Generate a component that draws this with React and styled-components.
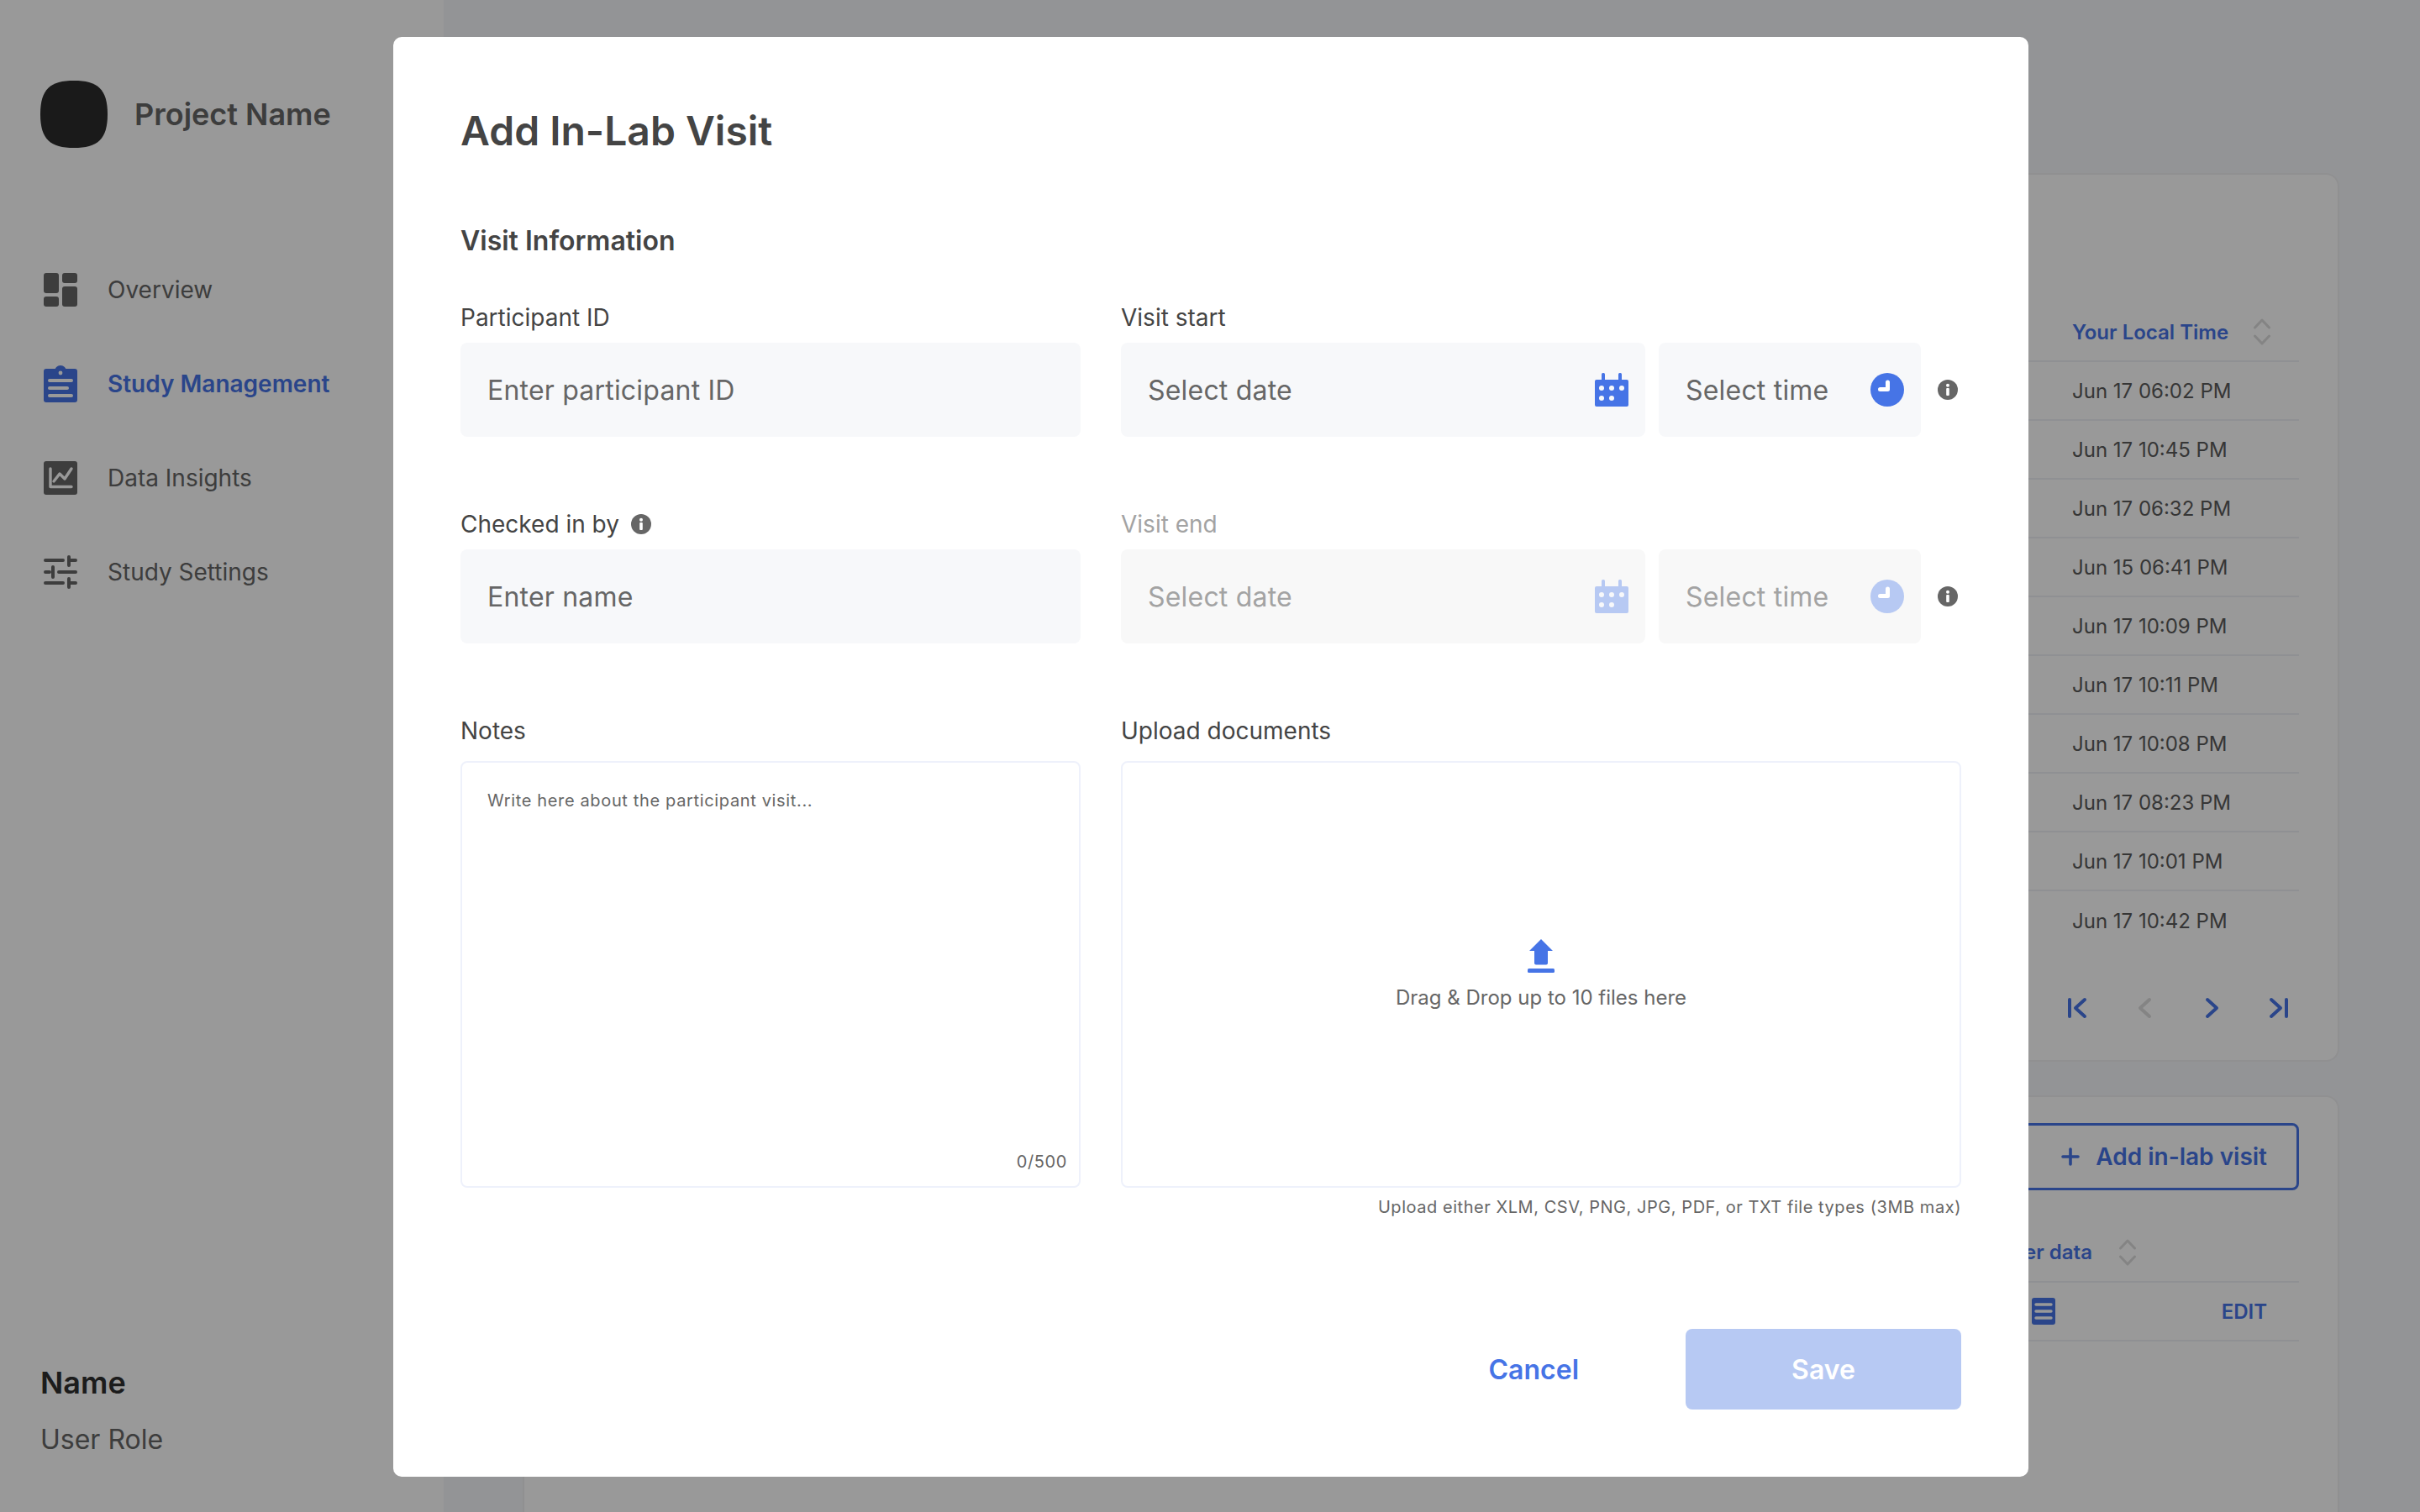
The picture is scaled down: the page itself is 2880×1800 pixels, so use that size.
import React from "react";
import styled, { createGlobalStyle } from "styled-components";

const BLUE = "#4674e6";
const PALE = "#b7c9f3";

const Global = createGlobalStyle`
  html, body { margin: 0; padding: 0; height: 100%; overflow: hidden; background: #f5f7fa; }
  body, button { font-family: Inter, "Noto Sans", sans-serif; }
  #root { height: 1800px; }
  * { box-sizing: border-box; }
`;

const Page = styled.div`display: flex; width: 2880px; height: 1800px; overflow: hidden; background: #f5f7fa;`;

const Sidebar = styled.aside`
  width: 528px; flex: none; background: #fff; display: flex; flex-direction: column;
  padding: 96px 0 0 48px;
`;
const Brand = styled.div`display: flex; align-items: center; gap: 32px; height: 80px; margin-bottom: 141px;`;
const BrandName = styled.div`font-size: 36px; font-weight: 600; color: #666; white-space: nowrap;`;
const Nav = styled.nav`display: flex; flex-direction: column; gap: 56px; padding-left: 4px;`;
const NavItem = styled.div`
  display: flex; align-items: center; gap: 36px; height: 56px;
  font-size: 28px;
  font-weight: ${(p) => (p.$active ? 600 : 400)};
  color: ${(p) => (p.$active ? BLUE : "#666")};
  svg { flex: none; width: 40px; }
`;
const UserBlock = styled.div`margin-top: auto; padding-bottom: 64px;`;
const UserName = styled.div`font-size: 36px; font-weight: 600; color: #303030; line-height: 44px; margin-bottom: 24px;`;
const UserRole = styled.div`font-size: 32px; color: #666; line-height: 44px;`;

const Main = styled.main`flex: 1; display: flex; flex-direction: column; gap: 40px; padding: 206px 96px 0 94px;`;
const Card = styled.section`
  background: #fff; border: 2px solid #f0f0f2; border-radius: 16px; padding: ${(p) => p.$pad}; flex: none;
  height: ${(p) => p.$height};
`;
const Row = styled.div`
  display: grid; grid-template-columns: 1fr 270px; align-items: center; height: 70px;
  border-bottom: ${(p) => (p.$last ? "none" : "2px solid #eef1f6")};
  font-size: 24px; color: #5a5a5a;
`;
const HeadCell = styled.div`display: flex; align-items: center; gap: 30px; font-size: 24px; font-weight: 600; color: ${BLUE}; white-space: nowrap;`;
const Pager = styled.div`display: flex; justify-content: flex-end; gap: 56px; margin-top: 56px; padding-right: 12px;`;
const AddRow = styled.div`display: flex; justify-content: flex-end;`;
const AddButton = styled.button`
  display: flex; align-items: center; justify-content: flex-end; gap: 19px; width: 344px; height: 80px;
  padding: 0 35px 0 0; background: #fff; border: 3px solid ${BLUE}; border-radius: 8px;
  font-size: 28px; font-weight: 600; color: ${BLUE};
`;
const PlainHead = styled.div`
  display: flex; align-items: center; justify-content: flex-end; gap: 32px; height: 76px; margin-top: 34px;
  padding: 5px 194px 0 0; border-bottom: 2px solid #eef1f6;
  font-size: 24px; font-weight: 600; color: ${BLUE};
`;
const DocRow = styled.div`
  display: flex; align-items: center; justify-content: flex-end; gap: 198px; height: 70px;
  padding-right: 38px; border-bottom: 2px solid #eef1f6;
  font-size: 24px; font-weight: 600; color: ${BLUE};
`;

const Overlay = styled.div`
  position: fixed; inset: 0; background: rgba(0, 0, 0, 0.4); display: flex; justify-content: flex-start; align-items: flex-start;
  padding: 44px 0 0 468px;
`;
const Modal = styled.div`
  width: 1946px; height: 1714px; background: #fff; border-radius: 10px; padding: 82px 80px 80px;
  display: flex; flex-direction: column;
`;
const Title = styled.h1`margin: 0; font-size: 48px; line-height: 60px; font-weight: 600; color: #444;`;
const SectionTitle = styled.h2`margin: 81px 0 0; font-size: 32px; line-height: 40px; font-weight: 600; color: #444;`;
const Form = styled.div`
  display: grid; grid-template-columns: 738px 1000px; column-gap: 48px; row-gap: 86px; margin-top: 53px;
`;
const Field = styled.div`display: flex; flex-direction: column; min-width: 0;`;
const Label = styled.div`
  display: flex; align-items: center; gap: 14px; height: 36px; margin-bottom: 12px;
  font-size: 28px; color: ${(p) => (p.$off ? "#a3a3a3" : "#444")};
`;
const BoxLabel = styled(Label)`margin-bottom: 18px;`;
const Inputs = styled.div`display: flex; align-items: center;`;
const Input = styled.div`
  height: 112px; border-radius: 8px; background: ${(p) => (p.$off ? "#f8f8f8" : "#f7f8fa")};
  display: flex; align-items: center; justify-content: space-between;
  width: ${(p) => p.$w}; flex: none;
  padding: 0 ${(p) => p.$pr || "32px"} 0 32px; margin-right: ${(p) => p.$mr || 0};
  font-size: 32px; letter-spacing: 0.2px; color: ${(p) => (p.$off ? "#a3a3a3" : "#666")}; white-space: nowrap;
  svg { flex: none; }
`;
const Area = styled.div`
  position: relative; height: 508px; border: 2px solid #eef1fb; border-radius: 8px;
  padding: 29px 30px; font-size: 20px; color: #666; letter-spacing: 0.65px; line-height: 32px;
`;
const Counter = styled.div`position: absolute; right: 14px; bottom: 16px; font-size: 20px; line-height: 26px; color: #666; letter-spacing: 0.6px;`;
const Drop = styled.div`
  height: 508px; border: 2px solid #eef1fb; border-radius: 8px; display: flex; flex-direction: column;
  align-items: center; padding-top: 210px; font-size: 24px; color: #666;
`;
const DropText = styled.div`margin-top: 12px; line-height: 36px;`;
const Hint = styled.div`margin-top: 9px; text-align: right; font-size: 20px; line-height: 28px; color: #666; letter-spacing: 0.55px;`;
const Footer = styled.div`display: flex; justify-content: flex-end; align-items: center; margin-top: auto;`;
const Cancel = styled.button`
  border: 0; background: none; padding: 0; margin-right: 127px;
  font-size: 32px; font-weight: 600; color: ${BLUE};
`;
const Save = styled.button`
  width: 328px; height: 96px; border: 0; border-radius: 8px; background: ${PALE};
  font-size: 32px; font-weight: 600; color: #fff;
`;

const Logo = () => (
  <svg width="80" height="80" viewBox="0 0 80 80"><path fill="#2c2c2c" d="M40 0C68 0 80 10 80 40S68 80 40 80 0 70 0 40 12 0 40 0Z" /></svg>
);
const IconOverview = () => (
  <svg width="40" height="40" viewBox="0 0 40 40" fill="#666">
    <rect x="0" y="0" width="18" height="24" rx="3" /><rect x="0" y="28" width="18" height="12" rx="3" />
    <rect x="22" y="0" width="18" height="12" rx="3" /><rect x="22" y="16" width="18" height="24" rx="3" />
  </svg>
);
const IconClipboard = () => (
  <svg width="40" height="44" viewBox="0 0 40 44">
    <rect y="4" width="40" height="40" rx="3" fill={BLUE} /><circle cx="20" cy="7" r="7" fill={BLUE} />
    <circle cx="20" cy="9" r="2.4" fill="#fff" />
    <g stroke="#fff" strokeWidth="4" strokeLinecap="round">
      <path d="M7 18H33M7 27H28M7 36H33" />
    </g>
  </svg>
);
const IconChart = () => (
  <svg width="40" height="40" viewBox="0 0 40 40">
    <rect width="40" height="40" rx="3" fill="#666" />
    <path d="M8 9V30.5H33M12 24L19 15L25 21L33 9" fill="none" stroke="#fff" strokeWidth="3.4" strokeLinecap="round" strokeLinejoin="round" />
  </svg>
);
const IconSliders = () => (
  <svg width="40" height="40" viewBox="0 0 40 40" fill="none" stroke="#666" strokeWidth="4" strokeLinecap="round">
    <path d="M2 6H23M30 2V12M30 6H38M2 20H7M11 14V26M18 20H38M2 33H23M30 28V38M30 33H38" />
  </svg>
);
const IconCalendar = ({ c }) => (
  <svg width="40" height="40" viewBox="0 0 40 40">
    <rect y="8" width="40" height="32" rx="2" fill={c} />
    <rect x="8" width="4" height="12" rx="1.5" fill={c} /><rect x="28" width="4" height="12" rx="1.5" fill={c} />
    <g fill="#f7f8fa"><circle cx="8" cy="18" r="3" /><circle cx="20" cy="18" r="3" /><circle cx="32" cy="18" r="3" /><circle cx="8" cy="30" r="3" /><circle cx="20" cy="30" r="3" /></g>
  </svg>
);
const IconClock = ({ c }) => (
  <svg width="40" height="40" viewBox="0 0 40 40">
    <circle cx="20" cy="20" r="20" fill={c} />
    <path d="M20.5 11V19.5H11.5" fill="none" stroke="#fff" strokeWidth="5" strokeLinejoin="round" strokeLinecap="round" />
  </svg>
);
const InfoGlyph = styled.svg`margin-left: ${(p) => p.$ml || 0};`;
const IconInfo = ({ ml }) => (
  <InfoGlyph $ml={ml} width="24" height="24" viewBox="0 0 24 24">
    <circle cx="12" cy="12" r="12" fill="#666" /><circle cx="12" cy="6.8" r="2" fill="#fff" /><rect x="10.2" y="10" width="3.6" height="9" rx="1" fill="#fff" />
  </InfoGlyph>
);
const IconSort = () => (
  <svg width="20" height="32" viewBox="0 0 20 32" fill="none" stroke="#dcdcdc" strokeWidth="3" strokeLinecap="round" strokeLinejoin="round">
    <path d="M1.5 11L10 2L18.5 11M1.5 21L10 30L18.5 21" />
  </svg>
);
const PagerIcon = ({ d, c = BLUE }) => (
  <svg width="24" height="26" viewBox="0 0 24 26" fill="none" stroke={c} strokeWidth="4" strokeLinecap="round" strokeLinejoin="round"><path d={d} /></svg>
);
const IconDoc = () => (
  <svg width="28" height="32" viewBox="0 0 28 32">
    <rect width="28" height="32" rx="3" fill={BLUE} />
    <path d="M5 8H23M5 16H23M5 24H23" stroke="#fff" strokeWidth="3.4" strokeLinecap="round" />
  </svg>
);
const IconPlus = () => (
  <svg width="22" height="22" viewBox="0 0 22 22" stroke={BLUE} strokeWidth="3.6" strokeLinecap="round"><path d="M11 2V20M2 11H20" /></svg>
);
const IconUpload = () => (
  <svg width="32" height="40" viewBox="0 0 32 40" fill={BLUE}>
    <path d="M16 0L30 14H24V28.5A2 2 0 0 1 22 30.5H10A2 2 0 0 1 8 28.5V14H2Z" />
    <rect y="35" width="32" height="5" rx="1.5" />
  </svg>
);

const times = ["Jun 17 06:02 PM", "Jun 17 10:45 PM", "Jun 17 06:32 PM", "Jun 15 06:41 PM", "Jun 17 10:09 PM", "Jun 17 10:11 PM", "Jun 17 10:08 PM", "Jun 17 08:23 PM", "Jun 17 10:01 PM", "Jun 17 10:42 PM"];

export default function App() {
  return (
    <>
      <Global />
      <Page>
        <Sidebar>
          <Brand><Logo /><BrandName>Project Name</BrandName></Brand>
          <Nav>
            <NavItem><IconOverview />Overview</NavItem>
            <NavItem $active><IconClipboard />Study Management</NavItem>
            <NavItem><IconChart />Data Insights</NavItem>
            <NavItem><IconSliders />Study Settings</NavItem>
          </Nav>
          <UserBlock><UserName>Name</UserName><UserRole>User Role</UserRole></UserBlock>
        </Sidebar>
        <Main>
          <Card $pad="153px 46px 0" $height="1058px">
            <Row><span /><HeadCell>Your Local Time<IconSort /></HeadCell></Row>
            {times.map((t, i) => (
              <Row key={t} $last={i === times.length - 1}><span /><span>{t}</span></Row>
            ))}
            <Pager>
              <PagerIcon d="M3 3V23M21 3L10 13L21 23" />
              <PagerIcon c="#dcdcdc" d="M18 3L7 13L18 23" />
              <PagerIcon d="M7 3L18 13L7 23" />
              <PagerIcon d="M21 3V23M3 3L14 13L3 23" />
            </Pager>
          </Card>
          <Card $pad="31px 46px 0" $height="600px">
            <AddRow><AddButton><IconPlus />Add in-lab visit</AddButton></AddRow>
            <PlainHead>User data<IconSort /></PlainHead>
            <DocRow><IconDoc />EDIT</DocRow>
          </Card>
        </Main>
      </Page>
      <Overlay>
        <Modal>
          <Title>Add In-Lab Visit</Title>
          <SectionTitle>Visit Information</SectionTitle>
          <Form>
            <Field>
              <Label>Participant ID</Label>
              <Input $w="738px">Enter participant ID</Input>
            </Field>
            <Field>
              <Label>Visit start</Label>
              <Inputs>
                <Input $w="624px" $pr="20px" $mr="16px">Select date<IconCalendar c={BLUE} /></Input>
                <Input $w="312px" $pr="20px">Select time<IconClock c={BLUE} /></Input>
                <IconInfo ml="20px" />
              </Inputs>
            </Field>
            <Field>
              <Label>Checked in by<IconInfo /></Label>
              <Input $w="738px">Enter name</Input>
            </Field>
            <Field>
              <Label $off>Visit end</Label>
              <Inputs>
                <Input $off $w="624px" $pr="20px" $mr="16px">Select date<IconCalendar c={PALE} /></Input>
                <Input $off $w="312px" $pr="20px">Select time<IconClock c={PALE} /></Input>
                <IconInfo ml="20px" />
              </Inputs>
            </Field>
            <Field>
              <BoxLabel>Notes</BoxLabel>
              <Area>Write here about the participant visit...<Counter>0/500</Counter></Area>
            </Field>
            <Field>
              <BoxLabel>Upload documents</BoxLabel>
              <Drop><IconUpload /><DropText>Drag &amp; Drop up to 10 files here</DropText></Drop>
              <Hint>Upload either XLM, CSV, PNG, JPG, PDF, or TXT file types (3MB max)</Hint>
            </Field>
          </Form>
          <Footer><Cancel>Cancel</Cancel><Save>Save</Save></Footer>
        </Modal>
      </Overlay>
    </>
  );
}
